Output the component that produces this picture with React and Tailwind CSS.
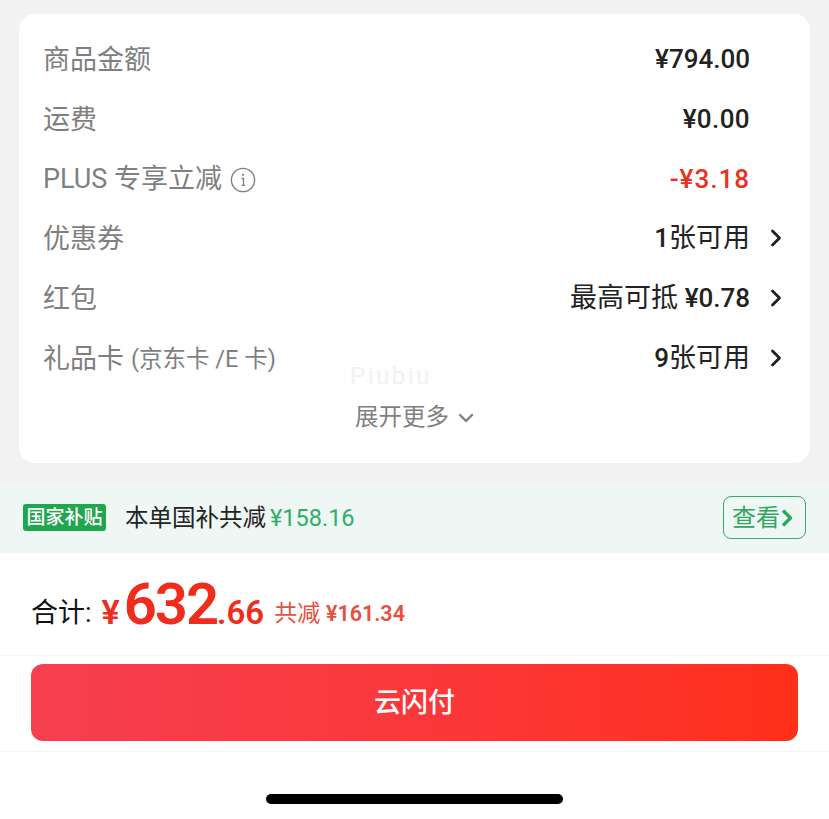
const FONT = "font-['Roboto','Noto_Sans_CJK_SC',sans-serif]";

function Chevron() {
  return (
    <svg width="12" height="18" viewBox="0 0 12 18" fill="none" className="ml-[20px] mr-[1px]">
      <path d="M2.5 2L9.5 9L2.5 16" stroke="#1f1f1f" strokeWidth="2.8" strokeLinecap="round" strokeLinejoin="round" />
    </svg>
  );
}

function Row({ label, children, arrow }) {
  return (
    <div className="h-[59.8px] flex items-center justify-between">
      <div className="text-[27px] leading-none text-[#7f7f7f] flex items-center pt-[3px]">{label}</div>
      <div className="flex items-center pr-[27px]">
        <div className={`text-[27px] leading-none text-[#222] ${arrow ? 'pt-[1px]' : 'mr-[33px] pt-[2px]'}`}>{children}</div>
        {arrow && <Chevron />}
      </div>
    </div>
  );
}

export default function App() {
  return (
    <div className={`${FONT} w-[829px] h-[819px] overflow-hidden bg-white flex flex-col`}>
      <div className="bg-[#f2f2f2] h-[484px] px-[19px] pt-[14px]">
        <div className="bg-white rounded-[16px] h-[449px] pl-[24px] pt-[15px] relative">
          <Row label="商品金额"><span className="font-medium text-[26px]">¥794.00</span></Row>
          <Row label="运费"><span className="font-medium text-[26px] tracking-[0.4px]">¥0.00</span></Row>
          <Row
            label={
              <>
                <span>PLUS 专享立减</span>
                <svg width="26" height="26" viewBox="0 0 26 26" fill="none" className="ml-[8px]">
                  <circle cx="13" cy="13" r="11.6" stroke="#7f7f7f" strokeWidth="1.4" />
                  <path d="M11.5 11.5H13.5V18M11.5 18.3H15" stroke="#7f7f7f" strokeWidth="1.3" />
                  <circle cx="13" cy="7.8" r="1.1" fill="#7f7f7f" />
                </svg>
              </>
            }
          >
            <span className="text-[#e8321e] font-medium text-[26px] tracking-[1px]">-¥3.18</span>
          </Row>
          <Row label="优惠券" arrow><span className="font-medium text-[26px]">1</span>张可用</Row>
          <Row label="红包" arrow>最高可抵 <span className="font-medium text-[26px]">¥0.78</span></Row>
          <Row
            label={
              <>
                <span>礼品卡</span>
                <span className="text-[23.5px] ml-[7px]">(京东卡 /E 卡)</span>
              </>
            }
            arrow
          >
            <span className="font-medium text-[26px]">9</span>张可用
          </Row>
          <div className="flex items-center justify-center text-[23.5px] leading-none text-[#7f7f7f] mt-[10px] ml-[-24px] h-[40px]">
            <span>展开更多</span>
            <svg width="16" height="10" viewBox="0 0 16 10" fill="none" className="ml-[9px]">
              <path d="M2 2L8 8L14 2" stroke="#7f7f7f" strokeWidth="2.4" strokeLinecap="round" strokeLinejoin="round" />
            </svg>
          </div>
          <div className="absolute left-[331px] top-[350px] text-[24px] leading-none tracking-[2.5px] text-[#f1f1f1]">Piubiu</div>
        </div>
      </div>

      <div className="bg-[#eef7f3] h-[69px] px-[23px] flex items-center">
        <div className="bg-[#1fa64f] text-white text-[19px] leading-none font-medium rounded-[3px] h-[27px] w-[83px] flex items-center justify-center mb-[2px]">国家补贴</div>
        <div className="ml-[19px] text-[23.5px] leading-none text-[#222] flex items-center">
          <span>本单国补共减</span>
          <span className="text-[#2fae6b] ml-[4px]">¥158.16</span>
        </div>
        <div className="ml-auto h-[43px] w-[83px] rounded-[8px] border border-[#3fa86f] text-[#2fa85f] text-[24px] leading-none flex items-center pl-[8px] mb-[2px]">
          <span>查看</span>
          <svg width="16" height="22" viewBox="0 0 16 22" fill="none" className="ml-[-1px]">
            <path d="M4 3.5L11.5 11L4 18.5" stroke="#2fa85f" strokeWidth="3.4" strokeLinejoin="round" />
          </svg>
        </div>
      </div>

      <div className="h-[103px] pl-[31px] border-b border-[#f6f6f6] flex items-center">
        <span className="text-[27px] leading-none text-[#111] mt-[18px]">合计:</span>
        <span className="text-[#ee2d1c] flex items-baseline ml-[10px] font-semibold leading-none mt-[-1px]">
          <span className="text-[34px] mr-[4px]">¥</span>
          <span className="text-[58px] tracking-[-2px]">632</span>
          <span className="text-[33px]">.66</span>
        </span>
        <span className="text-[#e8503e] ml-[10px] text-[23px] leading-none mt-[19px]">共减 <span className="font-semibold text-[21.5px]">¥161.34</span></span>
      </div>

      <div className="h-[96px] px-[31px] pt-[8px] border-b border-[#f6f6f6]">
        <div className="h-[77px] pt-[1px] rounded-[12px] bg-gradient-to-r from-[#f63f50] to-[#ff2f18] text-white text-[27px] leading-none font-medium flex items-center justify-center">云闪付</div>
      </div>

      <div className="flex-1 flex justify-center pt-[42px]">
        <div className="w-[297px] h-[10px] rounded-full bg-black" />
      </div>
    </div>
  );
}
